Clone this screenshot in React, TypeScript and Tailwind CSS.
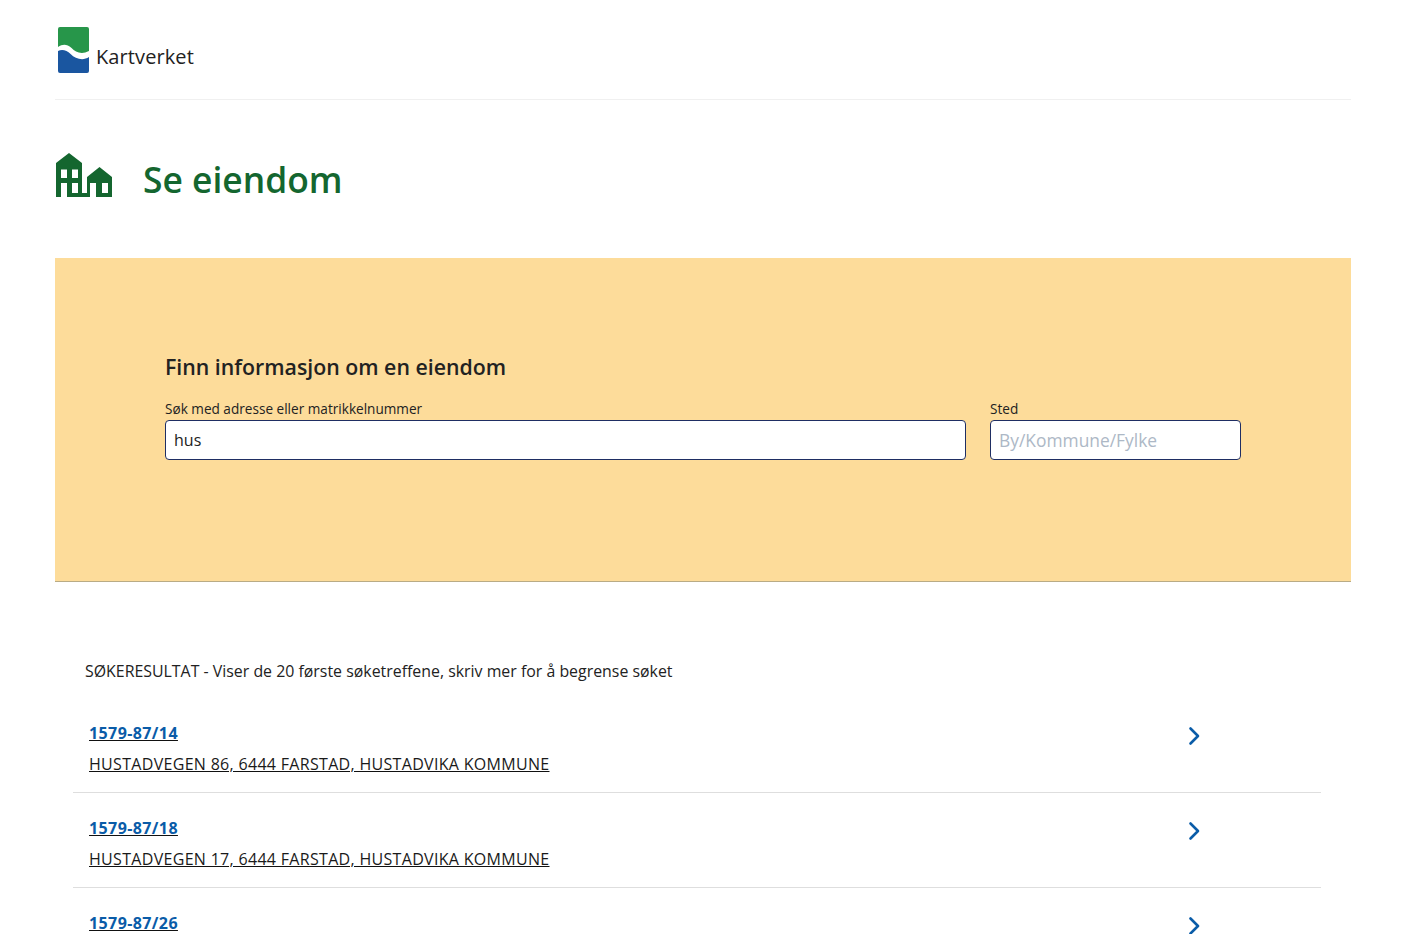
const results = [
  { id: "1579-87/14", address: "HUSTADVEGEN 86, 6444 FARSTAD, HUSTADVIKA KOMMUNE" },
  { id: "1579-87/18", address: "HUSTADVEGEN 17, 6444 FARSTAD, HUSTADVIKA KOMMUNE" },
  { id: "1579-87/26", address: "" },
]

function Logo() {
  return (
    <div className="flex items-start">
      <svg width="31" height="46" viewBox="0 0 32 46" preserveAspectRatio="none" className="block">
        <path d="M2 0H30a2 2 0 0 1 2 2V24C24 28 18 25 14 21C9 17 5 17 0 20V2a2 2 0 0 1 2-2Z" fill="#27964a" />
        <path d="M0 24C4 22 9 23 13 27C18 32 26 34 32 30V44a2 2 0 0 1-2 2H2a2 2 0 0 1-2-2Z" fill="#1a56a0" />
      </svg>
      <span className="mt-[17px] ml-[7px] font-['Open_Sans',sans-serif] text-[20px] leading-[26px] tracking-[0.1px] text-[#222]">
        Kartverket
      </span>
    </div>
  )
}

function HousesIcon() {
  return (
    <svg width="57" height="44" viewBox="0 0 57 44" fill="#14662f" className="mb-[9px] ml-[1px] block">
      <path
        fillRule="evenodd"
        d="M13 0L26 10V40H31V24L43.5 14L56 24V44H0V10ZM5 16.5h6v8.5h-6zM16 16.5h6v8.5h-6zM5 30h6v14h-6zM16 30h6v10h-6zM34 30h6v14h-6zM46 30h6v10h-6z"
      />
    </svg>
  )
}

export default function App() {
  return (
    <div className="h-[934px] overflow-hidden bg-white px-[55px] font-['Open_Sans',sans-serif] text-[#222]">
      <header className="flex h-[100px] items-start border-b border-[#f0f0f0] pt-[27px] pl-[3px]">
        <Logo />
      </header>

      <div className="flex h-[158px] items-center gap-[30px]">
        <HousesIcon />
        <h1 className="mt-[1px] text-[35.4px] font-semibold leading-none text-[#14662f]">Se eiendom</h1>
      </div>

      <section className="h-[324px] border-b border-[#b9ab85] bg-[#fddc9a] px-[110px] pt-[94px]">
        <h2 className="text-[21.3px] font-semibold leading-[30px]">Finn informasjon om en eiendom</h2>
        <div className="mt-[17px] flex gap-[24px]">
          <label className="block w-[801px]">
            <span className="mb-[1px] block text-[13.6px] leading-[20px]">Søk med adresse eller matrikkelnummer</span>
            <input
              readOnly
              value="hus"
              className="block h-[40px] w-full rounded-[4px] border border-[#1f2e63] bg-white px-2 text-[16px] outline-none"
            />
          </label>
          <label className="block w-[251px]">
            <span className="mb-[1px] block text-[13.6px] leading-[20px]">Sted</span>
            <input
              readOnly
              placeholder="By/Kommune/Fylke"
              className="block h-[40px] w-full rounded-[4px] border border-[#1f2e63] bg-white px-2 text-[17.4px] outline-none placeholder:text-[#adb8c6]"
            />
          </label>
        </div>
      </section>

      <p className="mt-[79px] ml-[30px] text-[15.9px] leading-[20px]">
        SØKERESULTAT - Viser de 20 første søketreffene, skriv mer for å begrense søket
      </p>

      <ul className="mt-[17px] ml-[18px] w-[1248px]">
        {results.map((r) => (
          <li key={r.id} className="flex h-[95px] items-start justify-between border-b border-[#dedede] pt-[25px] pl-[16px]">
            <div>
              <a href="#" className="block w-fit text-[16px] font-bold leading-[20px] tracking-[0.4px] text-[#0a5ca8] underline decoration-[#111]">
                {r.id}
              </a>
              {r.address && (
                <a href="#" className="mt-[11px] block w-fit text-[16px] leading-[20px] tracking-[0.31px] text-[#1a1a1a] underline decoration-[#111]">
                  {r.address}
                </a>
              )}
            </div>
            <svg width="14" height="22" viewBox="0 0 14 22" fill="none" className="mt-[2px] mr-[120px]">
              <path d="M3.5 3.5L11 11L3.5 18.5" stroke="#0a5ca8" strokeWidth="2.6" strokeLinecap="round" strokeLinejoin="round" />
            </svg>
          </li>
        ))}
      </ul>
    </div>
  )
}
